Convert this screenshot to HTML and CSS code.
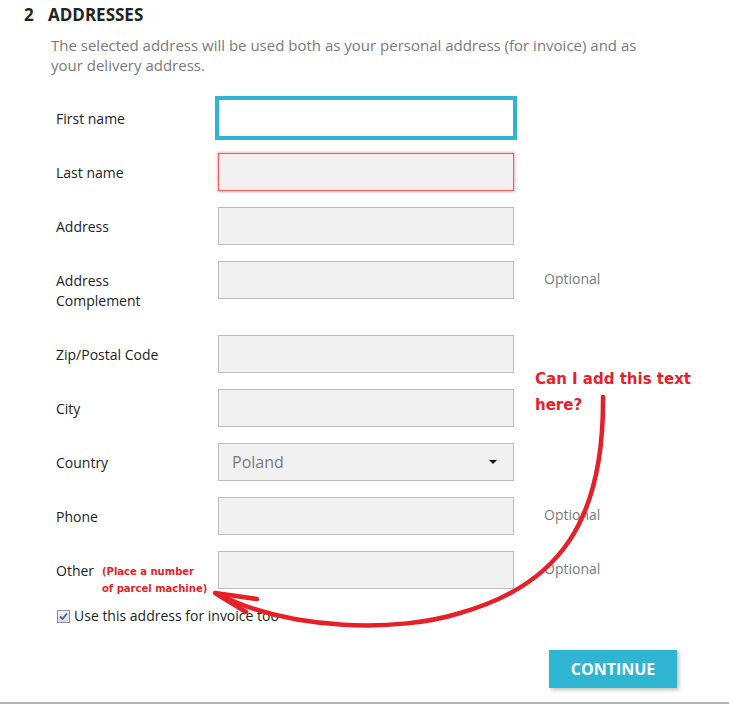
FILE: index.html
```html
<!DOCTYPE html>
<html lang="en">
<head>
<meta charset="utf-8">
<title>Addresses</title>
<link rel="stylesheet" href="styles.css">
</head>
<body>
<main class="page">
  <section class="step">
    <h2 class="step-title"><span class="step-num">2</span>Addresses</h2>
    <p class="step-desc">The selected address will be used both as your personal address (for invoice) and as your delivery address.</p>

    <form class="address-form">
      <div class="row">
        <label class="row-label">First name</label>
        <input class="input input-focus" type="text">
      </div>
      <div class="row">
        <label class="row-label">Last name</label>
        <input class="input input-error" type="text">
      </div>
      <div class="row">
        <label class="row-label">Address</label>
        <input class="input" type="text">
      </div>
      <div class="row">
        <label class="row-label">Address<br>Complement</label>
        <input class="input" type="text">
        <span class="row-hint">Optional</span>
      </div>
      <div class="row">
        <label class="row-label">Zip/Postal Code</label>
        <input class="input" type="text">
      </div>
      <div class="row">
        <label class="row-label">City</label>
        <input class="input" type="text">
      </div>
      <div class="row">
        <label class="row-label">Country</label>
        <div class="input select"><span>Poland</span><span class="caret"></span></div>
      </div>
      <div class="row">
        <label class="row-label">Phone</label>
        <input class="input" type="text">
        <span class="row-hint">Optional</span>
      </div>
      <div class="row">
        <label class="row-label label-other">Other<span class="note-small">(Place a number<br>of parcel machine)</span></label>
        <input class="input" type="text">
        <span class="row-hint">Optional</span>
      </div>

      <div class="check-row">
        <span class="check-box">
          <svg width="9" height="9" viewBox="0 0 9 9"><path d="M1 4.5 L3.5 7 L8 1.5" fill="none" stroke="#3a5fb0" stroke-width="1.8"/></svg>
        </span>
        <span>Use this address for invoice too</span>
      </div>

      <div class="actions">
        <button class="btn-continue" type="button">Continue</button>
      </div>
    </form>
  </section>

  <p class="note-big">Can I add this text<br>here?</p>

  <svg class="annot-arrow" width="729" height="704" viewBox="0 0 729 704">
    <path d="M603 397 C604 520 560 585 460 613 C400 632 290 632 216 593" fill="none" stroke="#e81e28" stroke-width="4.5" stroke-linecap="round"/>
    <path d="M257 599 L215 593 L246 612" fill="none" stroke="#e81e28" stroke-width="4.5" stroke-linecap="round" stroke-linejoin="round"/>
  </svg>
</main>
</body>
</html>
```

FILE: styles.css
```css
* { box-sizing: border-box; }

html, body {
  margin: 0;
  padding: 0;
  background: #fff;
}

body {
  font-family: "Open Sans", "Noto Sans", sans-serif;
  color: #232323;
  font-size: 14px;
}

.page {
  position: relative;
  width: 729px;
  height: 704px;
  border-bottom: 2px solid #b3b3b3;
}

.step {
  padding: 4px 52px 0 24px;
}

.step-title {
  margin: 0;
  font-size: 17px;
  line-height: 22px;
  font-weight: 700;
  text-transform: uppercase;
  color: #232323;
}

.step-num {
  display: inline-block;
  width: 24px;
}

.step-desc {
  margin: 9px 0 0 27px;
  width: 600px;
  font-size: 15px;
  line-height: 20px;
  color: #7a7a7a;
}

.address-form {
  margin: 24px 0 0 32px;
}

.row {
  display: grid;
  grid-template-columns: 162px 296px auto;
  align-items: start;
  margin-bottom: 16px;
}

.row-label {
  padding: 10px 0 8px;
  line-height: 20px;
  font-size: 14px;
  color: #232323;
}

.label-other {
  position: relative;
}

.note-small {
  position: absolute;
  left: 46px;
  top: 12px;
  font-family: "DejaVu Sans", sans-serif;
  font-weight: 700;
  font-size: 10px;
  line-height: 17px;
  color: #e81e28;
  white-space: nowrap;
}

.input {
  display: block;
  width: 296px;
  height: 38px;
  margin: 0;
  border: 1px solid #bdbdbd;
  background: #f1f1f1;
  font-family: inherit;
  font-size: 14px;
  outline: none;
}

.input-focus {
  background: #fff;
  border-color: #2fb5d2;
  outline: 3px solid #2fb5d2;
}

.input-error {
  border-color: #f05a5a;
  box-shadow: 0 0 2px 1px rgba(255, 90, 90, 0.45);
}

.select {
  display: flex;
  align-items: center;
  justify-content: space-between;
  padding: 0 16px 0 13px;
  font-size: 16px;
  color: #7a7a7a;
}

.caret {
  width: 0;
  height: 0;
  border-left: 4px solid transparent;
  border-right: 4px solid transparent;
  border-top: 4px solid #111;
}

.row-hint {
  margin-left: 30px;
  padding: 8px 0;
  line-height: 20px;
  font-size: 14px;
  color: #7a7a7a;
}

.check-row {
  display: flex;
  align-items: center;
  gap: 4px;
  margin: 17px 0 0 1px;
  height: 20px;
  font-size: 14px;
  line-height: 20px;
  color: #232323;
}

.check-box {
  display: inline-flex;
  align-items: center;
  justify-content: center;
  width: 13px;
  height: 13px;
  border: 1px solid #8e8f8f;
  background: linear-gradient(#f0f0f0, #dcdcdc);
}

.actions {
  display: flex;
  justify-content: flex-end;
  margin-top: 24px;
}

.btn-continue {
  width: 128px;
  height: 38px;
  border: 0;
  background: #2fb5d2;
  color: #fff;
  font-family: "Open Sans", sans-serif;
  font-weight: 700;
  font-size: 16px;
  text-transform: uppercase;
  box-shadow: 2px 2px 4px rgba(0, 0, 0, 0.25);
  cursor: pointer;
}

.note-big {
  position: absolute;
  left: 535px;
  top: 366px;
  margin: 0;
  font-family: "DejaVu Sans", sans-serif;
  font-weight: 700;
  font-size: 15px;
  line-height: 26px;
  color: #e81e28;
}

.annot-arrow {
  position: absolute;
  left: 0;
  top: 0;
  pointer-events: none;
}
```
